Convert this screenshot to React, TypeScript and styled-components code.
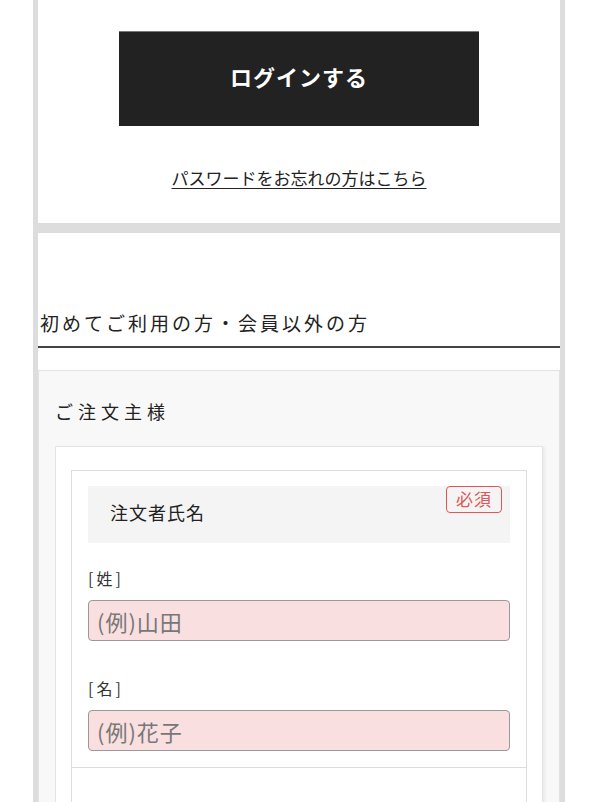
import React from 'react';
import styled, { createGlobalStyle } from 'styled-components';

const GlobalStyle = createGlobalStyle`
  body {
    margin: 0;
    background: #fff;
    font-family: "Noto Sans CJK JP", "Noto Sans", sans-serif;
    color: #222;
  }
`;

const Frame = styled.div`
  width: 532px;
  margin: 0 auto;
  box-sizing: border-box;
  padding: 0 5px;
  background: #ddd;
  display: flex;
  flex-direction: column;
  gap: 10px;
  min-height: 802px;
`;

const LoginPanel = styled.section`
  background: #fff;
  padding: 31px 0 33px;
  display: flex;
  flex-direction: column;
  align-items: center;
`;

const LoginButton = styled.button`
  width: 360px;
  height: 95px;
  border: none;
  border-top: 1px solid #777;
  background: #222;
  color: #fff;
  padding: 0 0 6px;
  font-family: inherit;
  font-size: 22px;
  font-weight: 700;
  letter-spacing: 1px;
  cursor: pointer;
`;

const ForgotLink = styled.a`
  margin-top: 40px;
  font-size: 17px;
  line-height: 24px;
  color: #222;
  text-decoration: underline;
  text-underline-offset: 3px;
`;

const GuestPanel = styled.section`
  background: #fff;
  flex: 1;
`;

const SectionTitle = styled.h2`
  margin: 0;
  padding: 76px 0 9px 2px;
  font-size: 19px;
  font-weight: 400;
  line-height: 28px;
  letter-spacing: 3px;
  color: #222;
  border-bottom: 2px solid #444;
`;

const OrderBox = styled.div`
  margin-top: 22px;
  background: #f8f8f8;
  border: 1px solid #e2e2e2;
  padding: 27px 16px 0;
`;

const BoxTitle = styled.h3`
  margin: 0 0 22px;
  font-size: 18px;
  font-weight: 400;
  line-height: 26px;
  letter-spacing: 5px;
  color: #222;
`;

const Card = styled.div`
  background: #fff;
  border: 1px solid #e4e4e4;
  box-shadow: 2px 1px 3px rgba(0, 0, 0, 0.06);
  padding: 23px 15px 0;
`;

const FieldTable = styled.div`
  border: 1px solid #ddd;
  border-bottom: none;
`;

const FieldRow = styled.div<{ $empty?: boolean }>`
  padding: ${(p) => (p.$empty ? '0' : '15px 16px 16px')};
  min-height: ${(p) => (p.$empty ? '60px' : '0')};
  border-bottom: 1px solid #ddd;
`;

const RowHeader = styled.div`
  position: relative;
  height: 57px;
  box-sizing: border-box;
  background: #f4f4f4;
  padding: 0 0 6px 22px;
  display: flex;
  align-items: center;
  font-size: 18px;
  letter-spacing: 1px;
`;

const Required = styled.span`
  position: absolute;
  top: 0;
  right: 8px;
  width: 56px;
  height: 27px;
  box-sizing: border-box;
  border: 1.5px solid #e05656;
  border-radius: 4px;
  color: #e05656;
  font-size: 17px;
  padding-bottom: 2px;
  display: flex;
  align-items: center;
  justify-content: center;
  letter-spacing: 1px;
`;

const SubLabel = styled.label<{ $first?: boolean }>`
  display: block;
  margin-top: ${(p) => (p.$first ? '23px' : '35px')};
  margin-bottom: 10px;
  font-size: 16px;
  line-height: 24px;
  letter-spacing: 3px;
  color: #333;
`;

const TextInput = styled.input`
  display: block;
  width: 100%;
  height: 41px;
  box-sizing: border-box;
  background: #f9dfdf;
  border: 1px solid #999;
  border-radius: 4px;
  padding: 0 8px;
  font-family: inherit;
  font-size: 22px;
  letter-spacing: 1px;
  color: #333;
  &::placeholder {
    color: #777;
  }
`;

const nameFields = [
  { label: '[姓]', placeholder: '(例)山田' },
  { label: '[名]', placeholder: '(例)花子' },
];

const App: React.FC = () => {
  return (
    <>
      <GlobalStyle />
      <Frame>
        <LoginPanel>
          <LoginButton>ログインする</LoginButton>
          <ForgotLink href="#">パスワードをお忘れの方はこちら</ForgotLink>
        </LoginPanel>
        <GuestPanel>
          <SectionTitle>初めてご利用の方・会員以外の方</SectionTitle>
          <OrderBox>
            <BoxTitle>ご注文主様</BoxTitle>
            <Card>
              <FieldTable>
                <FieldRow>
                  <RowHeader>
                    注文者氏名
                    <Required>必須</Required>
                  </RowHeader>
                  {nameFields.map((f, i) => (
                    <div key={f.label}>
                      <SubLabel $first={i === 0}>{f.label}</SubLabel>
                      <TextInput placeholder={f.placeholder} />
                    </div>
                  ))}
                </FieldRow>
                <FieldRow $empty />
              </FieldTable>
            </Card>
          </OrderBox>
        </GuestPanel>
      </Frame>
    </>
  );
};

export default App;
